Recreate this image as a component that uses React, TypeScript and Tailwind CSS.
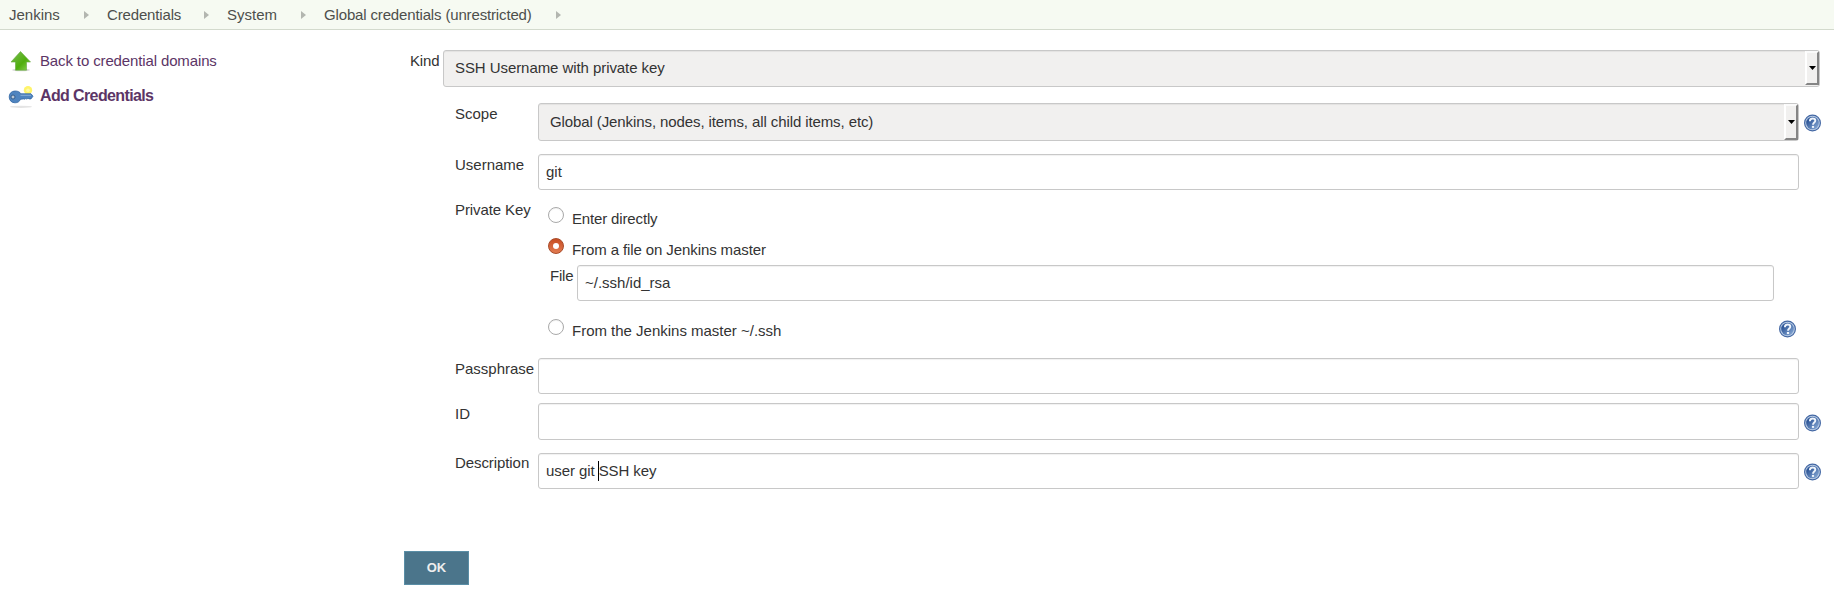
import type { ReactNode } from "react";

const inset = "shadow-[inset_0_1px_1px_rgba(0,0,0,0.06)]";

function Crumb({ children, className }: { children: ReactNode; className: string }) {
  return (
    <li className={`flex shrink-0 items-center justify-between whitespace-nowrap ${className}`}>
      <a href="#">{children}</a>
      <svg className="h-[8px] w-[5px]" viewBox="0 0 5 8" fill="#b3b6b0">
        <path d="M0 0 5 4 0 8Z" />
      </svg>
    </li>
  );
}

function HelpIcon() {
  return (
    <svg className="h-[18px] w-[18px] shrink-0" viewBox="0 0 18 18">
      <defs>
        <linearGradient id="help-fill" x1="0" y1="0" x2="1" y2="1">
          <stop offset="0.25" stopColor="#31599a" />
          <stop offset="1" stopColor="#8fb0da" />
        </linearGradient>
      </defs>
      <circle cx="8.5" cy="9" r="7.9" fill="#b9cce4" stroke="#4468a4" strokeWidth="1.2" />
      <circle cx="8.5" cy="9" r="6.3" fill="url(#help-fill)" />
      <path d="M5.900 7.200C5.900 5.200 7 4.500 8.600 4.500s2.700.800 2.700 2.200c0 1.700-2.300 2-2.300 4" fill="none" stroke="#eef4fb" strokeWidth="1.900" />
      <path d="M7.900 11.900h2.200v2h-2.200z" fill="#eef4fb" />
    </svg>
  );
}

function Select({ children, className }: { children: ReactNode; className: string }) {
  return (
    <div className={`flex items-center justify-between rounded-[3px] border border-[#c8c8c8] bg-[#f1f0ef] pl-[11px] text-[#333] ${inset} ${className}`}>
      <span className="whitespace-nowrap">{children}</span>
      <span className="flex h-full w-[14px] shrink-0 items-center justify-center border-y-2 border-r-2 border-l-2 border-t-[#fafafa] border-r-[#858585] border-b-[#858585] border-l-white bg-[#f1f0ef]">
        <svg className="h-[4px] w-[7px] shrink-0" viewBox="0 0 7 4"><path d="M0 0h7L3.5 4Z" fill="#000" /></svg>
      </span>
    </div>
  );
}

function Field({ children, className }: { children?: ReactNode; className: string }) {
  return (
    <div className={`flex items-center whitespace-pre rounded-[3px] border border-[#c8c8c8] bg-white pl-[7px] text-[#333] ${inset} ${className}`}>
      {children}
    </div>
  );
}

function Radio({ checked = false, className, children }: { checked?: boolean; className: string; children: ReactNode }) {
  return (
    <div className="flex h-[21px] gap-[8px]">
      {checked ? (
        <span className="flex h-4 w-4 items-center justify-center rounded-full border border-[#a84a28] bg-linear-to-b from-[#c84d22] to-[#e27b50]">
          <span className="h-[6px] w-[6px] rounded-full bg-white" />
        </span>
      ) : (
        <span className="h-4 w-4 rounded-full border border-[#a9a9a9] bg-white shadow-[inset_0_1px_1px_rgba(0,0,0,0.06)]" />
      )}
      <span className={`mt-[3px] whitespace-nowrap ${className}`}>{children}</span>
    </div>
  );
}

function Row({ label, className, labelClass, children }: { label: string; className: string; labelClass: string; children: ReactNode }) {
  return (
    <div className={`flex items-start ${className}`}>
      <div className={`w-[83px] shrink-0 whitespace-nowrap ${labelClass}`}>{label}</div>
      {children}
    </div>
  );
}

export default function App() {
  return (
    <div className="h-[593px] w-[1834px] overflow-hidden bg-white font-['Liberation_Sans',Arial,sans-serif] text-[15px] leading-[18px] text-[#333]">
      <ul className="flex h-[30px] items-center border-b border-[#d3dacd] bg-[#f6faf2] pl-[9px] text-[#4d4f4c]">
        <Crumb className="mr-[18px] w-[80px]">Jenkins</Crumb>
        <Crumb className="mr-[18px] w-[102px] tracking-[-0.15px]">Credentials</Crumb>
        <Crumb className="mr-[18px] w-[79px]">System</Crumb>
        <Crumb className="w-[237px] tracking-[-0.15px]">Global credentials (unrestricted)</Crumb>
      </ul>
      <div className="flex">
        <nav className="w-[404px] shrink-0 pl-[8px] pt-[20px] text-[#5c3566]">
          <a href="#" className="flex h-[22px] items-center">
            <svg className="h-[24px] w-[24px] shrink-0" viewBox="0 0 24 24">
              <defs>
                <linearGradient id="arrow-fill" x1="0" y1="0" x2="1" y2="1">
                  <stop offset="0" stopColor="#7cbd55" />
                  <stop offset="0.6" stopColor="#4fae0c" />
                  <stop offset="1" stopColor="#8fd45a" />
                </linearGradient>
              </defs>
              <ellipse cx="13" cy="21" rx="9" ry="1.3" fill="#d9d9d9" />
              <path d="M12.5 2.500 22.500 13h-4v8.200H7.500V13H3Z" fill="url(#arrow-fill)" stroke="#65a83d" strokeWidth="0.6" />
            </svg>
            <span className="ml-[8px] whitespace-nowrap tracking-[-0.13px]">Back to credential domains</span>
          </a>
          <a href="#" className="mt-[12px] flex h-[24px] items-center text-[16px] font-bold">
            <svg className="h-[24px] w-[26px] shrink-0" viewBox="0 0 26 24">
              <ellipse cx="13" cy="22.8" rx="11" ry="1.1" fill="#e4e4e4" />
              <circle cx="20" cy="6.2" r="4.2" fill="#fff46b" />
              <circle cx="20" cy="6.2" r="1.8" fill="#fff9a8" />
              <path d="M7 7c3 0 5 1 5.800 2.800H23l2 2.400-2 2.700h-2l-1-.600-1.200.800-1-.600-1.200.700-1-.300-3 .300C11.500 17.500 9.800 18.800 7 18.800c-3.600 0-5.800-2.600-5.800-5.900S3.400 7 7 7Z" fill="#4f84bf" stroke="#3468a6" strokeWidth="0.8" />
              <path d="M12.500 11.300h10.500" stroke="#8fb3da" strokeWidth="0.900" />
              <circle cx="5" cy="13" r="2" fill="#b9c7d6" stroke="#2e5687" strokeWidth="0.900" />
            </svg>
            <span className="ml-[6px] whitespace-nowrap tracking-[-0.62px]">Add Credentials</span>
          </a>
        </nav>
        <main className="flex flex-1 flex-col pt-[20px]">
          <div className="flex items-start pl-[6px]">
            <div className="w-[33px] shrink-0 pt-[2px] tracking-[-0.15px]">Kind</div>
            <Select className="h-[37px] w-[1377px] pb-[1px] tracking-[-0.07px]">SSH Username with private key</Select>
          </div>
          <div className="flex flex-col pl-[51px] pt-[16px]">
            <Row label="Scope" labelClass="pt-[2px]" className="h-[51px]">
              <Select className="h-[38px] w-[1261px] tracking-[-0.1px]">Global (Jenkins, nodes, items, all child items, etc)</Select>
              <div className="ml-[5px] mt-[11px]"><HelpIcon /></div>
            </Row>
            <Row label="Username" labelClass="pt-[2px]" className="h-[47px]">
              <Field className="h-[36px] w-[1261px]">git</Field>
            </Row>
            <Row label="Private Key" labelClass="tracking-[-0.1px]" className="h-[157px]">
              <div className="flex w-[1261px] flex-col pl-[10px] pt-[6px]">
                <Radio className="tracking-[-0.15px]">Enter directly</Radio>
                <div className="mt-[10px]"><Radio checked className="tracking-[-0.1px]">From a file on Jenkins master</Radio></div>
                <div className="mt-[6px] flex items-start pl-[2px]">
                  <div className="w-[27px] pt-[2px] tracking-[-0.2px]">File</div>
                  <Field className="h-[36px] w-[1197px]">~/.ssh/id_rsa</Field>
                </div>
                <div className="mt-[18px] flex justify-between pr-[2px]">
                  <Radio className="tracking-[-0.01px]">From the Jenkins master ~/.ssh</Radio>
                  <div className="mt-[1px]"><HelpIcon /></div>
                </div>
              </div>
            </Row>
            <Row label="Passphrase" labelClass="pt-[2px]" className="h-[45px]">
              <Field className="h-[36px] w-[1261px]" />
            </Row>
            <Row label="ID" labelClass="pt-[2px]" className="h-[50px]">
              <Field className="h-[37px] w-[1261px]" />
              <div className="ml-[5px] mt-[11px]"><HelpIcon /></div>
            </Row>
            <Row label="Description" labelClass="pt-[1px] tracking-[-0.08px]" className="h-[98px]">
              <Field className="h-[36px] w-[1261px] tracking-[-0.08px]">
                user git <span className="-ml-px h-[20px] w-px bg-black" />SSH key
              </Field>
              <div className="ml-[5px] mt-[10px]"><HelpIcon /></div>
            </Row>
          </div>
          <button className="h-[34px] w-[65px] border border-[#5a8ea6] bg-[#4b758b] text-[13px] font-bold text-[#eee]">OK</button>
        </main>
      </div>
    </div>
  );
}
